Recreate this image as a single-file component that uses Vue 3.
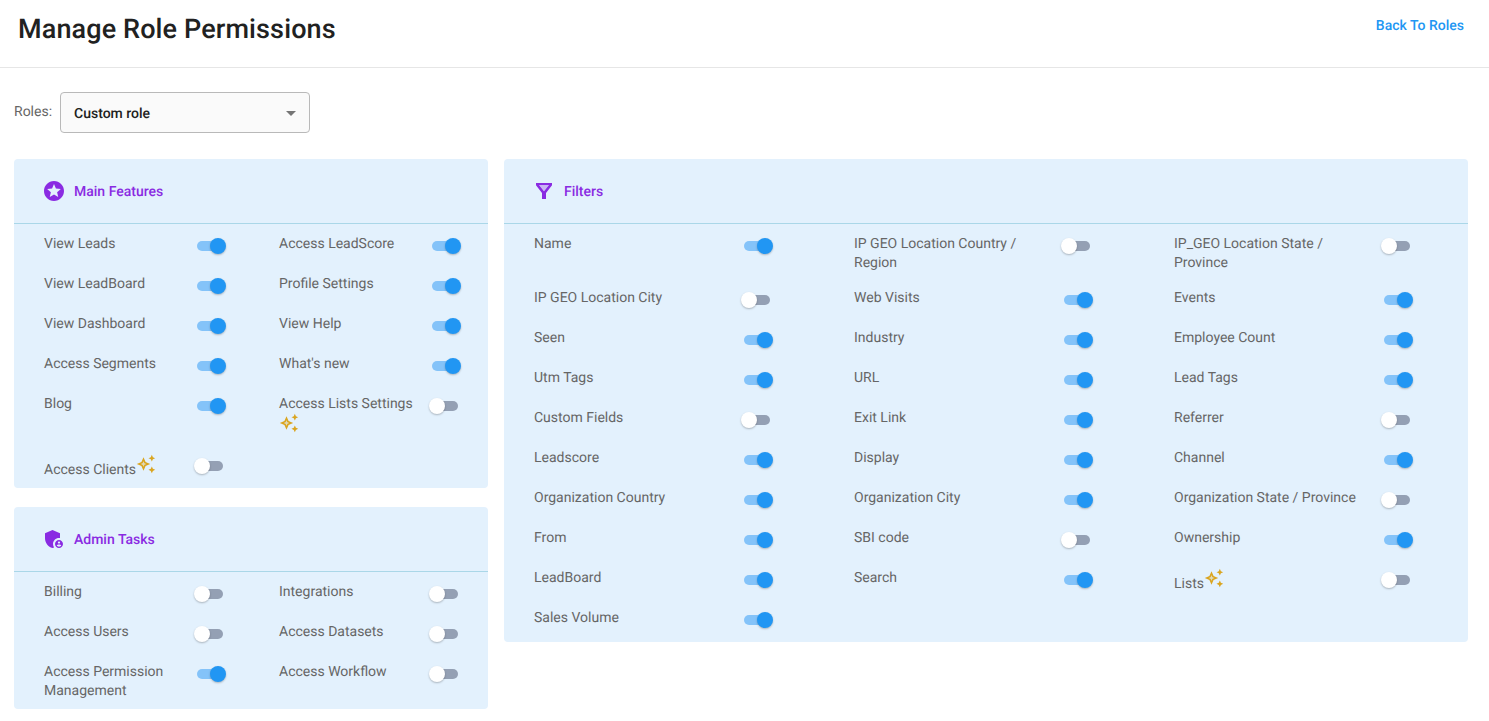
<script setup>
const parse = (text) =>
  text.split('|').map((entry) => {
    const [, on, spark, label] = entry.match(/^([+-])(\*?)(.*)$/)
    return { on: on === '+', spark: !!spark, label }
  })

const mainFeatures = parse(
  "+View Leads|+Access LeadScore|+View LeadBoard|+Profile Settings|+View Dashboard|+View Help|+Access Segments|+What's new|+Blog|-*Access Lists Settings|-*Access Clients"
)
const adminTasks = parse(
  '-Billing|-Integrations|-Access Users|-Access Datasets|+Access Permission Management|-Access Workflow'
)
const filters = parse(
  '+Name|-IP GEO Location Country / Region|-IP_GEO Location State / Province|-IP GEO Location City|+Web Visits|+Events|+Seen|+Industry|+Employee Count|+Utm Tags|+URL|+Lead Tags|-Custom Fields|+Exit Link|-Referrer|+Leadscore|+Display|+Channel|+Organization Country|+Organization City|-Organization State / Province|+From|-SBI code|+Ownership|+LeadBoard|+Search|-*Lists|+Sales Volume'
)

const columns = [
  [
    { key: 'main', title: 'Main Features', icon: 'star', items: mainFeatures },
    { key: 'admin', title: 'Admin Tasks', icon: 'shield', items: adminTasks }
  ],
  [{ key: 'filters', title: 'Filters', icon: 'funnel', items: filters }]
]
</script>

<template>
  <div class="page">
    <header class="topbar">
      <h1>Manage Role Permissions</h1>
      <a class="back">Back To Roles</a>
    </header>

    <div class="role-row">
      <label>Roles:</label>
      <div class="select">
        <span>Custom role</span>
        <svg width="24" height="24" viewBox="0 0 24 24"><path d="M7 10l5 5 5-5z" /></svg>
      </div>
    </div>

    <main class="boards">
      <div v-for="(column, c) in columns" :key="c" class="column">
        <section v-for="card in column" :key="card.key" class="card" :class="card.key">
          <div class="card-head">
            <svg class="head-icon" width="24" height="24" viewBox="0 0 24 24">
              <template v-if="card.icon === 'star'">
                <path d="M11.99 2C6.47 2 2 6.48 2 12s4.47 10 9.99 10C17.52 22 22 17.52 22 12S17.52 2 11.99 2zm4.24 16L12 15.45 7.77 18l1.12-4.81-3.73-3.23 4.92-.42L12 5l1.92 4.53 4.92.42-3.73 3.23L16.23 18z" />
              </template>
              <template v-else-if="card.icon === 'shield'">
                <path d="M17 11c.34 0 .67.04 1 .09V6.27L10.5 3 3 6.27v4.91c0 4.54 3.2 8.79 7.5 9.82.55-.13 1.08-.32 1.6-.55-.69-.98-1.1-2.17-1.1-3.45 0-3.31 2.69-6 6-6z" />
                <path d="M17 13c-2.21 0-4 1.79-4 4s1.79 4 4 4 4-1.79 4-4-1.79-4-4-4zm0 1.38c.62 0 1.12.51 1.12 1.12s-.51 1.12-1.12 1.12-1.12-.51-1.12-1.12.5-1.12 1.12-1.12zm0 5.37c-.93 0-1.74-.46-2.24-1.17.05-.72 1.51-1.08 2.24-1.08s2.19.36 2.24 1.08c-.5.71-1.31 1.17-2.24 1.17z" />
              </template>
              <template v-else>
                <path opacity=".3" d="M12 12l5-6H7z" />
                <path d="M4 4h16v2.2L14 14v6h-4v-6L4 6.2zM7 6l5 6.3L17 6z" fill-rule="evenodd" />
              </template>
            </svg>
            <h2>{{ card.title }}</h2>
          </div>
          <div class="grid">
            <div v-for="item in card.items" :key="item.label" class="item">
              <div class="label" :class="{ featured: item.spark }">{{ item.label }}<svg
                v-if="item.spark" class="spark" width="20" height="20" viewBox="0 0 24 24">
                <path opacity=".3" d="M9.99 12.99 9 15.17l-.99-2.18L5.83 12l2.18-.99L9 8.83l.99 2.18 2.18.99z" />
                <path fill-rule="evenodd" d="M19 9l1.25-2.75L23 5l-2.75-1.25L19 1l-1.25 2.75L15 5l2.75 1.25zM19 15l-1.25 2.75L15 19l2.75 1.25L19 23l1.25-2.75L23 19l-2.75-1.25zM11.5 9.5L9 4 6.5 9.5 1 12l5.5 2.5L9 20l2.5-5.5L17 12zM9.99 12.99L9 15.17l-.99-2.18L5.83 12l2.18-.99L9 8.83l.99 2.18 2.18.99z" />
              </svg></div>
              <span class="toggle" :class="{ on: item.on }"><i></i></span>
            </div>
          </div>
        </section>
      </div>
    </main>
  </div>
</template>

<style>
body {
  margin: 0;
  background: #fff;
}
</style>

<style scoped>
.page {
  box-sizing: border-box;
  width: 1489px;
  height: 721px;
  overflow: hidden;
  font-family: Roboto, "Liberation Sans", sans-serif;
  font-size: 14px;
  line-height: 19px;
  text-rendering: geometricPrecision;
  color: #666;
}
.topbar {
  box-sizing: border-box;
  height: 68px;
  padding: 0 25px 0 18px;
  display: flex;
  justify-content: space-between;
  border-bottom: 1px solid #e6e6e6;
}
h1 {
  margin: 10px 0 0;
  font-size: 27px;
  line-height: 38px;
  font-weight: 500;
  letter-spacing: 0.12px;
  color: #212121;
}
.back {
  margin-top: 17px;
  font-weight: 500;
  color: #2196f3;
}
.role-row {
  display: flex;
  padding: 24px 0 0 14px;
}
.role-row label {
  width: 46px;
  padding-top: 11px;
}
.select {
  box-sizing: border-box;
  width: 250px;
  height: 41px;
  padding: 0 6px 0 13px;
  display: flex;
  align-items: center;
  justify-content: space-between;
  border: 1px solid #b9b9b9;
  border-radius: 4px;
  background: #fafafa;
  color: #212121;
  font-weight: 500;
}
.select span {
  padding-top: 4px;
}
.select svg {
  fill: #757575;
}
.boards {
  display: flex;
  gap: 16px;
  padding: 26px 0 0 14px;
  align-items: flex-start;
}
.column {
  display: flex;
  flex-direction: column;
  gap: 19px;
}
.card {
  box-sizing: border-box;
  width: 474px;
  padding-bottom: 4px;
  border-radius: 4px;
  background: #e3f1fd;
}
.card.filters {
  width: 964px;
}
.card.admin {
  padding-bottom: 3px;
}
.card-head {
  box-sizing: border-box;
  height: 65px;
  padding: 0 28px 0;
  display: flex;
  align-items: center;
  gap: 8px;
  border-bottom: 1px solid #aad7e8;
}
h2 {
  margin: 0;
  padding-top: 2px;
  font-size: 14px;
  font-weight: 500;
  line-height: 20px;
  color: #8a2be2;
}
.head-icon {
  fill: #8a2be2;
}
.grid {
  display: grid;
  grid-template-columns: repeat(2, 235px);
  padding-left: 30px;
}
.filters .grid {
  grid-template-columns: repeat(3, 320px);
}
.item {
  display: flex;
  align-items: flex-start;
  min-height: 40px;
}
.label {
  box-sizing: border-box;
  width: 150px;
  padding: 11px 0 5px;
}
.label.featured {
  padding-bottom: 0;
}
.filters .label {
  width: 207px;
  padding-right: 20px;
}
.spark {
  margin-top: -1px;
  fill: #daa520;
  vertical-align: 0;
}
.main .item:nth-child(10) {
  height: 60px;
}
.toggle {
  position: relative;
  width: 32px;
  height: 16px;
  margin-top: 14px;
}
.toggle::before {
  content: "";
  position: absolute;
  left: 3px;
  top: 3px;
  width: 26px;
  height: 10px;
  border-radius: 5px;
  background: #94a0b4;
}
.toggle i {
  position: absolute;
  left: 0;
  top: 0;
  width: 16px;
  height: 16px;
  border-radius: 50%;
  background: #fff;
  box-shadow: 0 1px 2px rgba(0, 0, 0, 0.25);
}
.toggle.on::before {
  background: #84c3f9;
}
.toggle.on i {
  left: 16px;
  background: #2196f3;
}
</style>
